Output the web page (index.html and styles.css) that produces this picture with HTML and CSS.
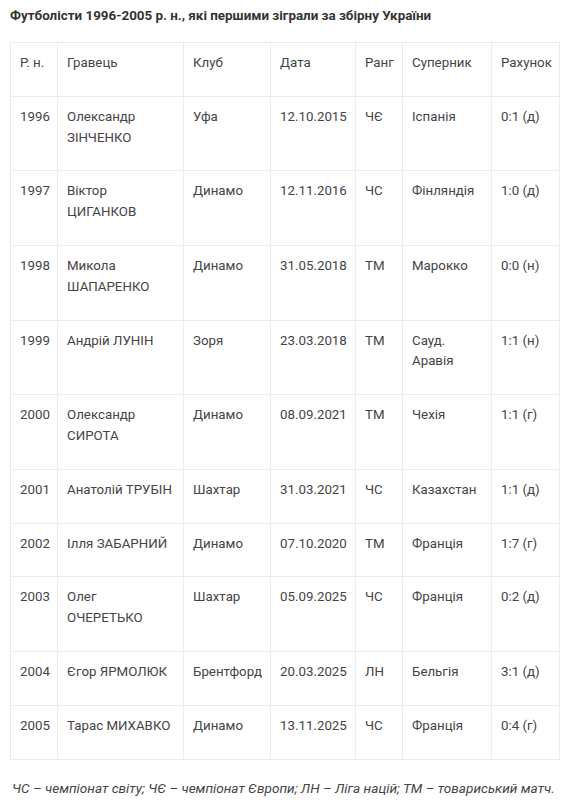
FILE: index.html
```html
<!DOCTYPE html>
<html lang="uk">
<head>
<meta charset="utf-8">
<link rel="stylesheet" href="styles.css">
</head>
<body>
<h3 class="title">Футболісти 1996-2005 р. н., які першими зіграли за збірну України</h3>
<table class="players">
<colgroup>
<col class="c-year"><col class="c-player"><col class="c-club"><col class="c-date"><col class="c-rank"><col class="c-opp"><col class="c-score">
</colgroup>
<thead>
<tr><td>Р. н.</td><td>Гравець</td><td>Клуб</td><td>Дата</td><td>Ранг</td><td>Суперник</td><td>Рахунок</td></tr>
</thead>
<tbody>
<tr><td>1996</td><td>Олександр ЗІНЧЕНКО</td><td>Уфа</td><td>12.10.2015</td><td>ЧЄ</td><td>Іспанія</td><td>0:1 (д)</td></tr>
<tr><td>1997</td><td>Віктор ЦИГАНКОВ</td><td>Динамо</td><td>12.11.2016</td><td>ЧС</td><td>Фінляндія</td><td>1:0 (д)</td></tr>
<tr><td>1998</td><td>Микола ШАПАРЕНКО</td><td>Динамо</td><td>31.05.2018</td><td>ТМ</td><td>Марокко</td><td>0:0 (н)</td></tr>
<tr><td>1999</td><td>Андрій ЛУНІН</td><td>Зоря</td><td>23.03.2018</td><td>ТМ</td><td>Сауд. Аравія</td><td>1:1 (н)</td></tr>
<tr><td>2000</td><td>Олександр СИРОТА</td><td>Динамо</td><td>08.09.2021</td><td>ТМ</td><td>Чехія</td><td>1:1 (г)</td></tr>
<tr><td>2001</td><td>Анатолій ТРУБІН</td><td>Шахтар</td><td>31.03.2021</td><td>ЧС</td><td>Казахстан</td><td>1:1 (д)</td></tr>
<tr><td>2002</td><td>Ілля ЗАБАРНИЙ</td><td>Динамо</td><td>07.10.2020</td><td>ТМ</td><td>Франція</td><td>1:7 (г)</td></tr>
<tr><td>2003</td><td>Олег ОЧЕРЕТЬКО</td><td>Шахтар</td><td>05.09.2025</td><td>ЧС</td><td>Франція</td><td>0:2 (д)</td></tr>
<tr><td>2004</td><td>Єгор ЯРМОЛЮК</td><td>Брентфорд</td><td>20.03.2025</td><td>ЛН</td><td>Бельгія</td><td>3:1 (д)</td></tr>
<tr><td>2005</td><td>Тарас МИХАВКО</td><td>Динамо</td><td>13.11.2025</td><td>ЧС</td><td>Франція</td><td>0:4 (г)</td></tr>
</tbody>
</table>
<p class="note">ЧС – чемпіонат світу; ЧЄ – чемпіонат Європи; ЛН – Ліга націй; ТМ – товариський матч.</p>
</body>
</html>
```
FILE: styles.css
```css
html, body {
  margin: 0;
  background: #fff;
}
body {
  padding: 6px 10px 0 10px;
  font-family: Roboto, "Noto Sans", sans-serif;
  font-size: 13.3px;
  color: #444;
}
.title {
  margin: 0;
  font-size: 13.4px;
  line-height: 20px;
  font-weight: 700;
  color: #333;
}
.players {
  margin-top: 16px;
  width: 549px;
  table-layout: fixed;
  border-collapse: collapse;
  font-size: 13.3px;
}
.players td {
  border: 1px solid #ececec;
  padding: 10px 9px 22px 9px;
  line-height: 20.8px;
  vertical-align: top;
  text-align: left;
}
.c-year { width: 47px; }
.c-player { width: 126px; }
.c-club { width: 87px; }
.c-date { width: 85px; }
.c-rank { width: 47px; }
.c-opp { width: 89px; }
.c-score { width: 68px; }
.note {
  margin: 18px 0 0 2px;
  font-size: 13.6px;
  font-style: italic;
  line-height: 20px;
  color: #444;
}
```
